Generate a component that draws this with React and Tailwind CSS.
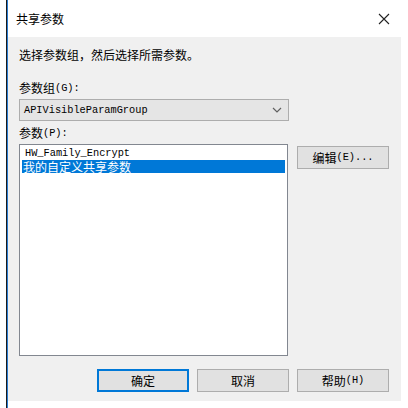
const cjk = { fontFamily: '"Noto Sans CJK SC", "Liberation Sans", sans-serif' };
const mono = { fontFamily: '"Liberation Mono", "DejaVu Sans Mono", monospace' };

function Mono({ children }) {
  return (
    <span style={mono} className="text-[10.3px]">
      {children}
    </span>
  );
}

function Button({ children, primary, className = "" }) {
  return (
    <div
      className={`flex h-[23px] w-[92px] items-center justify-center bg-[#e1e1e1] text-[12px] text-black ${
        primary ? "border-2 border-[#0078d7]" : "border border-[#adadad]"
      } ${className}`}
    >
      {children}
    </div>
  );
}

export default function App() {
  return (
    <div className="flex h-[408px] w-[408px] bg-white leading-none" style={cjk}>
      <div className="w-[6px]" />
      <div className="w-px bg-[#1b1b1b]" />
      <div className="w-px bg-[#2a7bd0]" />
      <div className="flex w-[393px] flex-col">
        {/* title bar */}
        <div className="flex h-[37px] items-center justify-between bg-white pl-[8px] pr-[11px]">
          <span className="text-[12px] text-black">共享参数</span>
          <svg width="12" height="12" viewBox="0 0 12 12" className="mt-px">
            <path d="M1 1L11 11M11 1L1 11" stroke="#222" strokeWidth="1.1" fill="none" />
          </svg>
        </div>

        {/* body */}
        <div className="flex h-[364px] flex-col bg-[#f0f0f0] pl-[11px]">
          <div className="mt-[12px] h-[12px] text-[12px] text-black">
            选择参数组，然后选择所需参数。
          </div>

          <div className="mt-[21px] flex h-[12px] items-center text-[12px] text-black">
            参数组<Mono>(G):</Mono>
          </div>

          <div className="mt-[5px] flex h-[22px] w-[270px] items-center justify-between border border-[#adadad] bg-[#e5e5e5] pl-[4px] pr-[6px]">
            <Mono>APIVisibleParamGroup</Mono>
            <svg width="10" height="6" viewBox="0 0 10 6">
              <path d="M1 1L5 5L9 1" stroke="#606060" strokeWidth="1.2" fill="none" />
            </svg>
          </div>

          <div className="mt-[6px] flex h-[12px] items-center text-[12px] text-black">
            参数<Mono>(P):</Mono>
          </div>

          <div className="mt-[5px] flex items-start gap-[9px]">
            <div className="flex h-[212px] w-[269px] flex-col border border-[#828790] bg-white px-[2px] pt-[2px]">
              <div className="flex h-[13px] items-center pl-[3px] text-black">
                <Mono>HW_Family_Encrypt</Mono>
              </div>
              <div className="flex h-[13px] items-center bg-[#0078d7] pl-px text-[12px] text-white">
                我的自定义共享参数
              </div>
            </div>
            <Button className="mt-[2px] h-[22px]">
              编辑<Mono>(E)...</Mono>
            </Button>
          </div>

          <div className="mt-[13px] flex gap-[8px] pl-[78px]">
            <Button primary>确定</Button>
            <Button>取消</Button>
            <Button>
              帮助<Mono>(H)</Mono>
            </Button>
          </div>
        </div>
      </div>
    </div>
  );
}
